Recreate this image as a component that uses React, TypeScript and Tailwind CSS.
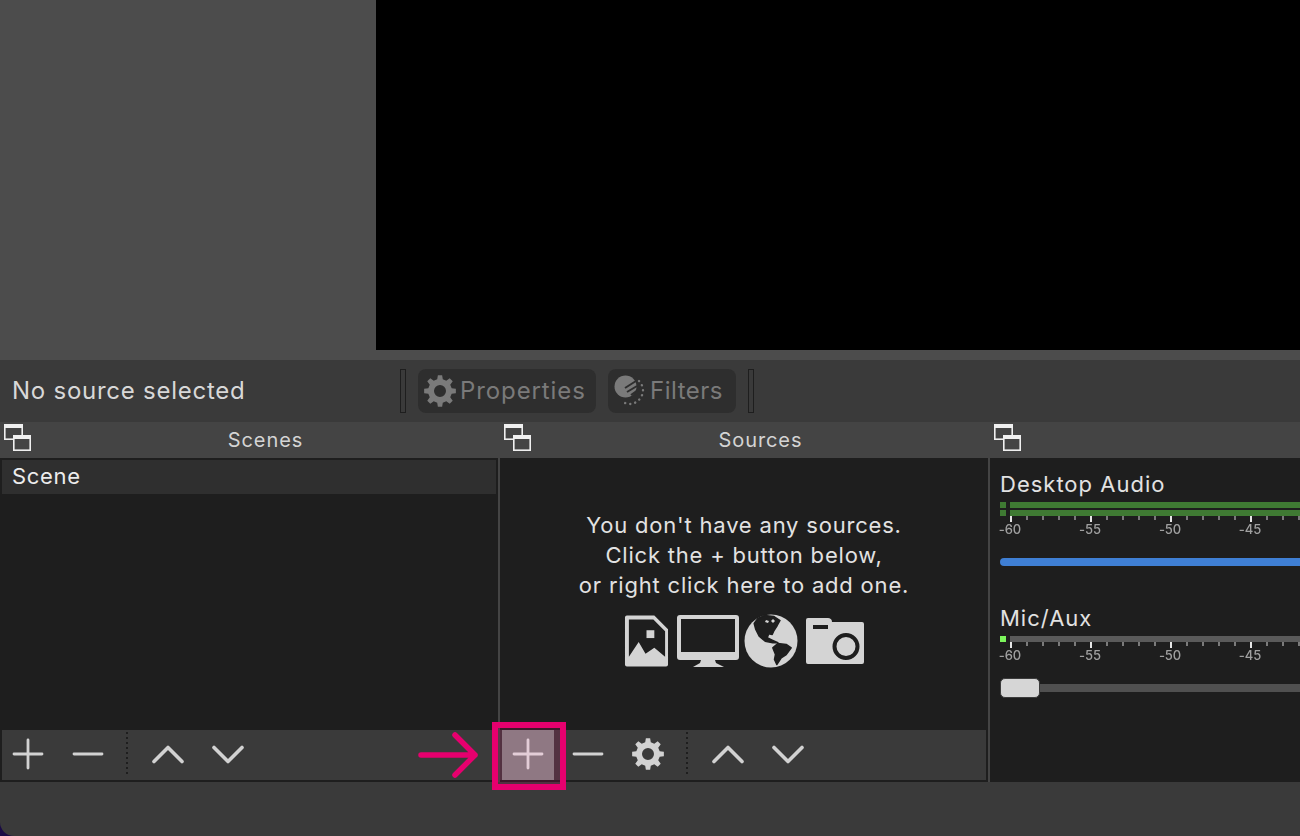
const font = { fontFamily: 'Inter, "Liberation Sans", sans-serif' }

function gearPath(cx: number, cy: number, teeth: number, outer: number, inner: number, hole: number) {
  const pts: string[] = []
  const step = (Math.PI * 2) / teeth
  for (let i = 0; i < teeth; i++) {
    const a = i * step - Math.PI / 2
    const add = (r: number, t: number) => {
      const x = cx + r * Math.cos(a + t * step)
      const y = cy + r * Math.sin(a + t * step)
      pts.push(`${x.toFixed(2)} ${y.toFixed(2)}`)
    }
    add(inner, -0.3)
    add(outer, -0.17)
    add(outer, 0.17)
    add(inner, 0.3)
  }
  const ring = `M${pts.join('L')}Z`
  return `${ring}M${cx - hole} ${cy}a${hole} ${hole} 0 1 0 ${hole * 2} 0a${hole} ${hole} 0 1 0 ${-hole * 2} 0Z`
}

function Gear({ size, color }: { size: number; color: string }) {
  return (
    <svg width={size} height={size} viewBox="0 0 32 32" fill={color}>
      <path fillRule="evenodd" d={gearPath(16, 16, 8, 16, 12, 6)} />
    </svg>
  )
}

function DockIcon() {
  return (
    <svg width="28" height="28" viewBox="0 0 28 28" fill="none" stroke="#f0f0f0" strokeWidth="1.6">
      <rect x="0.8" y="0.8" width="17.4" height="14.4" fill="#444" />
      <rect x="0" y="0" width="19" height="4" fill="#f0f0f0" stroke="none" />
      <rect x="9.800" y="11.800" width="16.4" height="14.4" fill="#444" />
      <rect x="9" y="11" width="18" height="4" fill="#f0f0f0" stroke="none" />
    </svg>
  )
}

function Plus() {
  return (
    <svg width="32" height="32" viewBox="0 0 32 32" stroke="#d2d2d2" strokeWidth="2.8" strokeLinecap="round">
      <path d="M2 16h28M16 2v28" />
    </svg>
  )
}

function Minus() {
  return (
    <svg width="32" height="32" viewBox="0 0 32 32" stroke="#d2d2d2" strokeWidth="2.8" strokeLinecap="round">
      <path d="M2 16h28" />
    </svg>
  )
}

function Up() {
  return (
    <svg width="32" height="32" viewBox="0 0 32 32" fill="none" stroke="#d2d2d2" strokeWidth="3.6" strokeLinecap="round" strokeLinejoin="round">
      <path d="M2 23.500 16 9.500l14 14" />
    </svg>
  )
}

function Down() {
  return (
    <svg width="32" height="32" viewBox="0 0 32 32" fill="none" stroke="#d2d2d2" strokeWidth="3.6" strokeLinecap="round" strokeLinejoin="round">
      <path d="M2 9.500l14 14 14-14" />
    </svg>
  )
}

function ToolButton({ children }: { children: React.ReactNode }) {
  return <div className="flex w-[60px] shrink-0 items-center justify-center">{children}</div>
}

function Divider() {
  return (
    <div className="mt-[2px] mr-[10px] mb-[1px] ml-[8px] w-[2px] shrink-0 bg-[repeating-linear-gradient(to_bottom,#1e1e1e_0,#1e1e1e_2px,transparent_2px,transparent_5px)]" />
  )
}

function Handle() {
  return <div className="h-[44px] w-[6px] shrink-0 border border-[#1e1e1e] bg-[#3a3a3a]" />
}

function DockTitle({ title }: { title?: string }) {
  return (
    <div className="flex h-[36px] shrink-0 bg-[#444444]">
      <div className="w-[32px] shrink-0 pt-[2px] pl-[4px]">
        <DockIcon />
      </div>
      {title && <div className="flex-1 pl-[1px] text-center text-[20px] leading-[36px] tracking-[0.9px] text-[#d4d4d4]">{title}</div>}
    </div>
  )
}

function ImageIcon() {
  return (
    <svg width="45" height="54" viewBox="0 0 46 54" fill="#d4d4d4">
      <path
        fillRule="evenodd"
        d="M3 1h28l14 14v36a2 2 0 0 1-2 2H3a2 2 0 0 1-2-2V3a2 2 0 0 1 2-2ZM5 5v38l10-15 7 12 9-6 11 9V17L30 5Z"
      />
      <rect x="23" y="16" width="8" height="8" />
    </svg>
  )
}

function MonitorIcon() {
  return (
    <svg width="64" height="54" viewBox="0 0 64 54" fill="#d4d4d4">
      <path
        fillRule="evenodd"
        d="M4 1h56a3 3 0 0 1 3 3v39a3 3 0 0 1-3 3H4a3 3 0 0 1-3-3V4a3 3 0 0 1 3-3ZM5 5v33h54V5Z"
      />
      <path d="M25 46h14l1 3 8 4H17l7-4Z" />
    </svg>
  )
}

function GlobeIcon() {
  return (
    <svg width="54" height="54" viewBox="0 0 54 54">
      <circle cx="27" cy="27" r="26.5" fill="#d4d4d4" />
      <g fill="#1e1e1e" stroke="#1e1e1e" strokeWidth="1.500" strokeLinejoin="round">
        <polygon points="13.800,4.500 20.500,1.500 30,2.500 36,6.500 33.200,11.500 30,16.500 28.200,20.500 24.800,19.800 23.200,23.800 28.200,26.200 33.800,28.800 28.800,28.800 21.200,27.200 15.200,22.200 11.800,15.500 10.200,9.500" />
        <polygon points="28.800,33.800 33.800,29.500 42.200,30.500 47.200,33.800 42.200,40.500 37.200,43.800 32.800,50.500 30.500,45.500 31.500,40.500" />
      </g>
      <path d="M22 6l3 1-1 2-3-1ZM29 5l2 2-2 2-2-2Z" fill="#d4d4d4" />
    </svg>
  )
}

function CameraIcon() {
  return (
    <svg width="60" height="48" viewBox="0 0 60 48" fill="#d4d4d4">
      <path
        fillRule="evenodd"
        d="M3 1h20c2 0 4 1 4 4h30a2 2 0 0 1 2 2v38a2 2 0 0 1-2 2H3a2 2 0 0 1-2-2V3a2 2 0 0 1 2-2ZM8 8v4h15V8ZM41 16a13.500 13.500 0 1 0 0 27 13.500 13.500 0 0 0 0-27Zm0 4a9.500 9.500 0 1 1 0 19 9.500 9.500 0 0 1 0-19Z"
      />
    </svg>
  )
}

function FilterIcon() {
  return (
    <svg width="32" height="32" viewBox="0 0 32 32">
      <circle cx="11.500" cy="11.500" r="11" fill="#7a7a7a" />
      <path d="M11 13l11-7M13 17l10-6M17 20l7-5" stroke="#2e2e2e" strokeWidth="2" fill="none" />
      <path
        fill="none"
        stroke="#7a7a7a"
        strokeWidth="2.4"
        strokeLinecap="round"
        strokeDasharray="0.1 5"
        d="M25 6a14 14 0 0 1 4 9 14 14 0 0 1-13 14 14 14 0 0 1-7-2"
      />
    </svg>
  )
}

function Meter({ children }: { children: React.ReactNode }) {
  const ticks = Array.from({ length: 25 }, (_, i) => i)
  const labels = ['-60', '-55', '-50', '-45']
  return (
    <div>
      {children}
      <div className="ml-[10px] flex h-[6px] items-start overflow-hidden">
        {ticks.map((i) => (
          <div key={i} className={i % 5 === 0 ? 'h-[6px] w-[16px] shrink-0' : 'h-[4px] w-[16px] shrink-0'}>
            <div className={i % 5 === 0 ? 'h-full w-[2px] bg-[#e6e6e6]' : 'h-full w-[2px] bg-[#7a7a7a]'} />
          </div>
        ))}
      </div>
      <div className="ml-[-30px] flex">
        {labels.map((l) => (
          <div
            key={l}
            className="w-[80px] shrink-0 text-center text-[13px] leading-[14px] font-medium tracking-[-0.1px] text-[#a0a0a0] blur-[0.5px]"
          >
            {l}
          </div>
        ))}
      </div>
    </div>
  )
}

export default function App() {
  return (
    <div className="h-[836px] w-[1300px] overflow-hidden bg-[#1a0b45]" style={font}>
      <div className="flex h-full w-full flex-col overflow-hidden rounded-bl-[14px] bg-[#3a3a3a]">
        {/* preview area */}
        <div className="flex h-[360px] shrink-0 bg-[#4c4c4c] pb-[10px]">
          <div className="w-[376px] shrink-0" />
          <div className="flex-1 bg-black" />
        </div>

        {/* context bar */}
        <div className="flex h-[62px] shrink-0 items-center">
          <div className="w-[400px] shrink-0 pl-[12px] text-[24px] tracking-[0.75px] text-[#d8d8d8]">No source selected</div>
          <Handle />
          <div className="ml-[12px] flex h-[44px] w-[178px] shrink-0 items-center rounded-[8px] bg-[#2e2e2e] pl-[6px] text-[24px] tracking-[0.9px] text-[#7a7a7a]">
            <Gear size={32} color="#7a7a7a" />
            <span className="ml-[4px]">Properties</span>
          </div>
          <div className="ml-[12px] flex h-[44px] w-[128px] shrink-0 items-center rounded-[8px] bg-[#2e2e2e] pl-[6px] text-[24px] tracking-[0.5px] text-[#7a7a7a]">
            <FilterIcon />
            <span className="ml-[4px]">Filters</span>
          </div>
          <div className="ml-[12px]">
            <Handle />
          </div>
        </div>

        {/* docks */}
        <div className="flex h-[360px] shrink-0">
          <div className="flex w-[498px] shrink-0 flex-col">
            <DockTitle title="Scenes" />
            <div className="flex flex-1 flex-col bg-[#1e1e1e] pt-[2px]">
              <div className="mx-[2px] h-[34px] bg-[#2f2f2f] pl-[10px] text-[22px] leading-[33px] tracking-[0.7px] text-[#ececec]">Scene</div>
              <div className="flex-1" />
              <div className="mb-[2px] ml-[2px] flex h-[50px] shrink-0 bg-[#3a3a3a] pb-[3px]">
                <div className="ml-[-4px] flex">
                  <ToolButton><Plus /></ToolButton>
                  <ToolButton><Minus /></ToolButton>
                  <Divider />
                  <ToolButton><Up /></ToolButton>
                  <ToolButton><Down /></ToolButton>
                </div>
              </div>
            </div>
          </div>

          <div className="w-[2px] shrink-0 bg-[#444444]" />

          <div className="flex w-[488px] shrink-0 flex-col">
            <DockTitle title="Sources" />
            <div className="flex flex-1 flex-col bg-[#1e1e1e]">
              <div className="flex flex-1 flex-col items-center pt-[52px]">
                <div className="text-center text-[22px] leading-[30px] tracking-[0.8px] text-[#e2e2e2]">
                  You don't have any sources.
                  <br />
                  Click the + button below,
                  <br />
                  or right click here to add one.
                </div>
                <div className="mt-[14px] flex items-end">
                  <ImageIcon />
                  <div className="ml-[7px]"><MonitorIcon /></div>
                  <div className="ml-[4px]"><GlobeIcon /></div>
                  <div className="mb-[3px] ml-[7px]"><CameraIcon /></div>
                </div>
              </div>
              <div className="relative mr-[2px] mb-[2px] flex h-[50px] shrink-0 bg-[#3a3a3a] pb-[3px]">
                <div className="ml-[-2px] flex">
                  <ToolButton><Plus /></ToolButton>
                  <ToolButton><Minus /></ToolButton>
                  <ToolButton><Gear size={32} color="#d2d2d2" /></ToolButton>
                  <Divider />
                  <ToolButton><Up /></ToolButton>
                  <ToolButton><Down /></ToolButton>
                </div>

                {/* annotation over the add button */}
                <div className="absolute top-[-8px] left-[-8px] h-[68px] w-[74px] border-[6px] border-[#e6006e] bg-[#e6006e]/15">
                  <div className="mt-[2px] ml-[4px] h-[50px] w-[52px] bg-white/35" />
                </div>
                <svg className="absolute top-[2px] left-[-82px]" width="62" height="46" viewBox="0 0 62 46" fill="none" stroke="#e6006e" strokeWidth="5.5" strokeLinecap="round" strokeLinejoin="round">
                  <path d="M3 23h54M37 3l20 20-20 20" />
                </svg>
              </div>
            </div>
          </div>

          <div className="w-[2px] shrink-0 bg-[#444444]" />

          <div className="flex min-w-0 flex-1 flex-col overflow-hidden">
            <DockTitle />
            <div className="flex-1 overflow-hidden bg-[#1e1e1e] pl-[10px]">
              <div className="w-[400px]">
                <div className="mt-[12px] text-[22px] leading-[28px] tracking-[1px] text-[#e2e2e2]">Desktop Audio</div>
                <div className="mt-[4px]">
                  <Meter>
                    <div className="flex flex-col gap-[2px]">
                      <div className="flex h-[6px] gap-[4px]">
                        <div className="w-[6px] bg-[#3f7a33]" />
                        <div className="flex-1 bg-[#3f7a33]" />
                      </div>
                      <div className="flex h-[6px] gap-[4px]">
                        <div className="w-[6px] bg-[#3f7a33]" />
                        <div className="flex-1 bg-[#3f7a33]" />
                      </div>
                    </div>
                  </Meter>
                </div>
                <div className="mt-[22px] h-[8px] rounded-l-[4px] bg-[#3f7fd4]" />
                <div className="mt-[38px] text-[22px] leading-[28px] tracking-[1px] text-[#e2e2e2]">Mic/Aux</div>
                <div className="mt-[4px]">
                  <Meter>
                    <div className="flex h-[6px] gap-[4px]">
                      <div className="w-[6px] bg-[#7cf55c]" />
                      <div className="flex-1 bg-[#5a5a5a]" />
                    </div>
                  </Meter>
                </div>
                <div className="mt-[16px] flex items-center">
                  <div className="h-[20px] w-[40px] shrink-0 rounded-[5px] border border-[#3c3c3c] bg-[#d6d6d6]" />
                  <div className="h-[8px] flex-1 bg-[#505050]" />
                </div>
              </div>
            </div>
          </div>
        </div>

        <div className="flex-1" />
      </div>
    </div>
  )
}
